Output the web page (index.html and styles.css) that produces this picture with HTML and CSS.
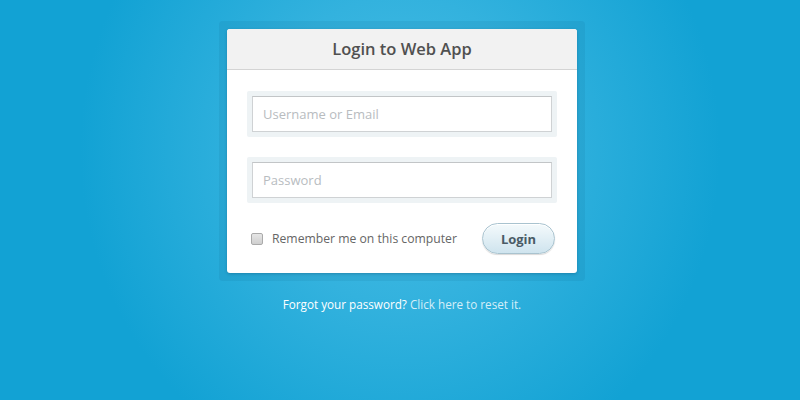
FILE: index.html
```html
<!DOCTYPE html>
<html lang="en">
<head>
  <meta charset="UTF-8" />
  <title>Login to Web App</title>
  <link rel="stylesheet" href="styles.css">
</head>
<body>
  <div class="login-page">
    <div class="login-frame">
      <div class="login-card">
        <h1 class="login-title">Login to Web App</h1>
        <form class="login-form">
          <div class="field-wrap">
            <input type="text" class="field" placeholder="Username or Email" />
          </div>
          <div class="field-wrap">
            <input type="password" class="field" placeholder="Password" />
          </div>
          <div class="login-actions">
            <label class="remember">
              <input type="checkbox" class="remember-box" />
              <span>Remember me on this computer</span>
            </label>
            <button type="button" class="login-btn">Login</button>
          </div>
        </form>
      </div>
    </div>
    <p class="forgot">Forgot your password? <a href="#">Click here to reset it.</a></p>
  </div>
</body>
</html>
```

FILE: styles.css
```css
html, body {
  height: 100%;
}
body {
  margin: 0;
  font-family: 'Open Sans', 'DejaVu Sans', sans-serif;
  color: #555;
  background-color: #12a2d4;
  background-image: radial-gradient(ellipse 320px 340px at 400px 150px, #48bee5 0%, #33b2de 45%, #12a2d4 100%);
}
.login-page {
  padding-top: 21px;
  padding-left: 4px;
}
.login-frame {
  width: 350px;
  margin: 0 auto;
  padding: 8px;
  background: rgba(0, 60, 100, 0.08);
  border-radius: 4px;
}
.login-card {
  background: #fff;
  border-radius: 3px;
  box-shadow: 0 1px 3px rgba(0, 40, 70, 0.25);
  overflow: hidden;
}
.login-title {
  margin: 0;
  height: 40px;
  line-height: 39px;
  background: #f2f2f2;
  border-bottom: 1px solid #d4d4d4;
  text-align: center;
  font-size: 16.5px;
  font-weight: 600;
  color: #505050;
}
.login-form {
  padding: 21px 20px 19px;
}
.field-wrap {
  padding: 5px;
  background: #eef3f5;
  border-radius: 2px;
  margin-bottom: 20px;
}
.field {
  display: block;
  box-sizing: border-box;
  width: 100%;
  height: 36px;
  padding: 0 10px;
  border: 1px solid #cfd2d4;
  border-top-color: #c2c5c7;
  background: #fff;
  font-family: inherit;
  font-size: 13px;
  color: #555;
  outline: none;
}
.field::placeholder {
  color: #b8bcbf;
}
.login-actions {
  display: flex;
  align-items: center;
  justify-content: space-between;
  padding-left: 4px;
  padding-right: 2px;
}
.remember {
  display: flex;
  align-items: center;
  gap: 9px;
  font-size: 12.2px;
  color: #666;
}
.remember-box {
  appearance: none;
  margin: 0;
  width: 12px;
  height: 12px;
  border: 1px solid #aaa;
  border-radius: 2px;
  background: linear-gradient(#e6e6e6, #cfcfcf);
}
.login-btn {
  width: 73px;
  height: 31px;
  border: 1px solid #a9c3cf;
  border-radius: 16px;
  background: linear-gradient(#f4fafc, #cfe4ee);
  box-shadow: 0 1px 1px rgba(0, 0, 0, 0.15), inset 0 1px 0 #fff;
  font-family: inherit;
  font-size: 13px;
  font-weight: 700;
  color: #4a5b66;
  cursor: pointer;
}
.forgot {
  margin: 15px 0 0;
  text-align: center;
  font-size: 11.7px;
  color: #fff;
}
.forgot a {
  color: #d6eef8;
  text-decoration: none;
}
```
